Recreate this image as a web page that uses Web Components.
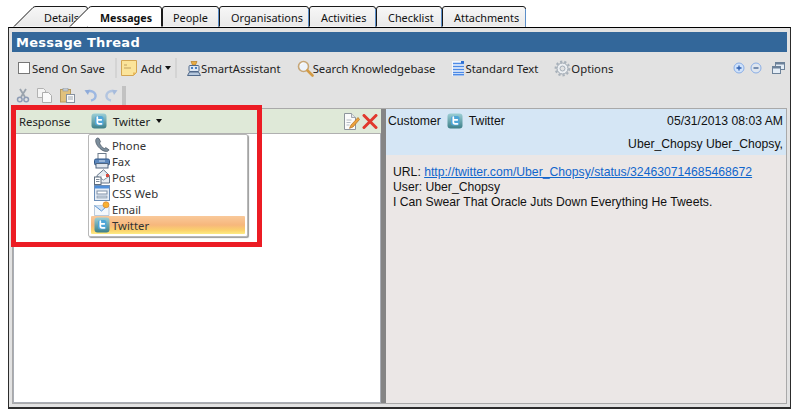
<!DOCTYPE html>
<html><head><meta charset="utf-8"><style>html,body{margin:0;background:#fff}</style></head><body>
<x-app></x-app>
<script>
const FONT='"Noto Sans","Open Sans",sans-serif';
const ICONS={
twitter:`<svg width="16" height="16" viewBox="0 0 16 16"><defs><linearGradient id="t1" x1="0" y1="0" x2="0" y2="1"><stop offset="0" stop-color="#9ccfd6"/><stop offset="1" stop-color="#3d7f88"/></linearGradient></defs><rect x=".5" y=".5" width="15" height="15" rx="3" fill="url(#t1)"/><rect x="4" y="3" width="8.5" height="9.5" rx="2.5" fill="#4fa6d8"/><path d="M6.3 4v5c0 1.3.7 1.8 1.8 1.8h2.4M6.3 6.8h4" fill="none" stroke="#fff" stroke-width="1.7" stroke-linecap="round"/></svg>`,
phone:`<svg width="16" height="16" viewBox="0 0 16 16"><path d="M2.500 1.500C1 3 1.500 6 4 9.500c2.500 3 5.500 5 8.500 5 1.300 0 2.300-.8 2.500-1.700l-3.200-2.200-1.400 1C8.500 10.800 6.500 8.500 5.500 6l1-1.300L5 1.500 3.500 1z" fill="#7c8e9c" stroke="#46525e" stroke-width=".7"/></svg>`,
fax:`<svg width="16" height="16" viewBox="0 0 16 16"><rect x="4" y=".5" width="8" height="6" fill="#fff" stroke="#6e7c8c"/><rect x=".5" y="6" width="15" height="6" rx="1.500" fill="#5b87bd" stroke="#2f5585"/><rect x="2" y="10.500" width="12" height="4.500" fill="#dfe6ee" stroke="#4e6580"/><path d="M5 8h6" stroke="#d7e4f2"/></svg>`,
post:`<svg width="16" height="16" viewBox="0 0 16 16"><path d="M3 6.500 9.500.8 15.500 6.500V14H3z" fill="#e7edf3" stroke="#66778a"/><path d="M3 7l6.500 4 6-4" fill="#fff" stroke="#8696a6"/><rect x="12" y="5" width="3" height="3" fill="#d84a3f"/><rect x=".5" y="8" width="6.500" height="7.500" fill="#fff" stroke="#5d6d7f"/><path d="M2 10.500h3.500M2 12.500h3.500" stroke="#7d8a98"/></svg>`,
web:`<svg width="16" height="16" viewBox="0 0 16 16"><rect x=".5" y=".5" width="15" height="15" fill="#e6edf6" stroke="#6a8db8"/><rect x="1" y="1" width="14" height="2.500" fill="#4f8fda"/><rect x="3" y="6" width="10" height="3" fill="#fff" stroke="#7d8fa6"/><rect x="3" y="11" width="10" height="2" fill="#c9d3df" stroke="#7d8fa6" stroke-width=".6"/></svg>`,
email:`<svg width="16" height="16" viewBox="0 0 16 16"><path d="M.5 4.500h11l3.500 1V14.500H.5z" fill="#f4f8fc" stroke="#a9bdd2" stroke-width=".8"/><path d="M.5 4.500 7.500 10 13 5" fill="#cfe2f5" stroke="#5f97d6"/><circle cx="12" cy="3.800" r="3" fill="#f8b133" stroke="#d9822b" stroke-width=".7"/></svg>`,
note:`<svg width="16" height="16" viewBox="0 0 16 16"><path d="M.5.500h15v12l-3 3H.5z" fill="#fbe49a" stroke="#d3a552"/><path d="M3 5h3M3 8h7" stroke="#c0a060"/><path d="M12 15.500v-3h3.500z" fill="#e9b95a"/></svg>`,
assist:`<svg width="16" height="16" viewBox="0 0 16 16"><path d="M5 1.500h6L9.500 5h-3z" fill="#e8ad45" stroke="#b57d27" stroke-width=".7"/><rect x="3" y="5.500" width="10" height="6" rx="1" fill="#dce6f2" stroke="#50698a"/><rect x="5" y="7" width="2" height="2" fill="#4a7fc0"/><rect x="9" y="7" width="2" height="2" fill="#4a7fc0"/><path d="M1.500 15.500 3.500 12h9l2 3.500z" fill="#b6c8dd" stroke="#50698a"/></svg>`,
search:`<svg width="17" height="17" viewBox="0 0 17 17"><circle cx="6.500" cy="6.500" r="5" fill="#eef4fb" stroke="#c7a676" stroke-width="1.600"/><path d="M3.500 5a3.500 3.500 0 0 1 3-2" stroke="#fff" fill="none"/><path d="M10.500 10.500l5 5" stroke="#d39b45" stroke-width="2.600" stroke-linecap="round"/></svg>`,
list:`<svg width="13" height="15" viewBox="0 0 13 15"><rect width="12" height="15" fill="#f3f7fd"/><path d="M1 2.500h11M1 5.500h11M1 8.500h11M1 11.500h11M1 13.800h11" stroke="#4d8ae6" stroke-width="1.600"/><rect x="9" y="0" width="3" height="2.500" fill="#2f6fd0"/></svg>`,
gear:`<svg width="17" height="17" viewBox="0 0 17 17"><circle cx="8.500" cy="8.500" r="5.500" fill="#eceff2" stroke="#9ca6b0"/><circle cx="8.500" cy="8.500" r="6.800" fill="none" stroke="#a8b1ba" stroke-width="2.200" stroke-dasharray="2.200 2"/><circle cx="8.500" cy="8.500" r="2.500" fill="#e2e2e2" stroke="#a3adb7"/></svg>`,
plus:`<svg width="12" height="12" viewBox="0 0 12 12"><circle cx="6" cy="6" r="5" fill="#cfe2fb" stroke="#8aaee6"/><path d="M3.500 6h5M6 3.500v5" stroke="#2d5db0" stroke-width="1.300"/></svg>`,
minus:`<svg width="12" height="12" viewBox="0 0 12 12"><circle cx="6" cy="6" r="5" fill="#dfe6ef" stroke="#8aaee6"/><path d="M3.500 6h5" stroke="#3d5f90" stroke-width="1.300"/></svg>`,
win:`<svg width="13" height="12" viewBox="0 0 13 12"><rect x="3.500" y=".5" width="9" height="7" fill="#e4edf6" stroke="#6d8299"/><rect x="4" y="1" width="8" height="1.500" fill="#6d8299"/><rect x=".5" y="4.500" width="8" height="7" fill="#e4edf6" stroke="#6d8299"/><rect x="1" y="5" width="7" height="1.500" fill="#6d8299"/></svg>`,
cut:`<svg width="14" height="15" viewBox="0 0 14 15"><path d="M4 1l5 8M10 1L5 9" stroke="#9aa3ad" stroke-width="1.800"/><circle cx="3.800" cy="11.500" r="2.300" fill="none" stroke="#8e9cb5" stroke-width="1.500"/><circle cx="10.200" cy="11.500" r="2.300" fill="none" stroke="#8e9cb5" stroke-width="1.500"/></svg>`,
copy:`<svg width="16" height="15" viewBox="0 0 16 15"><path d="M.5.500h6l2 2v7h-8z" fill="#f4f4f4" stroke="#b2b2b2"/><path d="M5.500 4.500h6l3 3v7h-9z" fill="#fafafa" stroke="#adadad"/></svg>`,
paste:`<svg width="15" height="15" viewBox="0 0 15 15"><rect x=".5" y="1.500" width="10" height="12.500" fill="#e1c17d" stroke="#b69a5e"/><rect x="3" y="0" width="5" height="3" fill="#c3cad3" stroke="#8d96a0" stroke-width=".6"/><rect x="6.500" y="6.500" width="8" height="8" fill="#fbfbfb" stroke="#8792a0"/><path d="M8 9h5M8 11h5" stroke="#9ea8b3"/></svg>`,
undo:`<svg width="14" height="13" viewBox="0 0 14 13"><path d="M3 3c4-2.500 9 .5 8.500 4.500C11.300 9.800 9 11 7 11.500" fill="none" stroke="#9db8e2" stroke-width="2.400"/><path d="M.5 1.200 5.800.8 4 6z" fill="#8fabd9"/></svg>`,
redo:`<svg width="14" height="13" viewBox="0 0 14 13"><path d="M11 3C7 .5 2 3.500 2.500 7.500 2.700 9.800 5 11 7 11.500" fill="none" stroke="#b3c5e0" stroke-width="2.400"/><path d="M13.500 1.200 8.200.8 10 6z" fill="#a6bbdc"/></svg>`,
edit:`<svg width="17" height="17" viewBox="0 0 17 17"><path d="M1.500.5h7l4 4v12h-11z" fill="#fbfbfb" stroke="#8e959c"/><path d="M8.500.5v4h4" fill="#e3e6ea" stroke="#8e959c" stroke-width=".8"/><path d="M3.500 7h5M3.500 9.500h4M3.500 12h3" stroke="#b5bcc4"/><path d="M15 4.500 8 12l-1.500 3.300L10 14l6.500-7.500z" fill="#eda23c" stroke="#b2701e" stroke-width=".7"/></svg>`,
del:`<svg width="16" height="15" viewBox="0 0 16 15"><path d="M2 1.500 14 13.500M14 1.500 2 13.500" stroke="#e1392c" stroke-width="3" stroke-linecap="round"/></svg>`
};
const def=(n,css,html,init)=>customElements.define(n,class extends HTMLElement{connectedCallback(){if(this.shadowRoot)return;const s=this.attachShadow({mode:'open'});s.innerHTML='<style>'+css+'</style>'+(typeof html==='function'?html(this):(html||''));init&&init(this,s);}});

def('x-ico',':host{display:inline-flex;flex:none;line-height:0}',h=>ICONS[h.getAttribute('n')]);

def('x-tab',`:host{display:block;position:relative;height:21px;flex:none;font:10.900px ${FONT};color:#111}
 svg{position:absolute;left:0;top:0;overflow:visible}
 span{position:absolute;top:4px;white-space:nowrap;line-height:16px}
 :host([active]){z-index:2;font-weight:700}
 :host([active]) span{font-size:10.700px}`,h=>{
 const w=+h.getAttribute('w'),sl=h.hasAttribute('slant');
 h.style.width=w+'px';
 const d=sl?`M0 20.500 L19 1.500 Q20 .5 22 .5 H${w-3} Q${w-.5} .5 ${w-.5} 3 V20.500`:`M.5 20.500 V3 Q.5 .5 3 .5 H${w-3} Q${w-.5} .5 ${w-.5} 3 V20.500`;
 const act=h.hasAttribute('active');
 return `<svg width="${w}" height="21"><defs><linearGradient id="g" x1="0" y1="0" x2="0" y2="1"><stop offset="0" stop-color="${act?'#fff':'#f7f7f7'}"/><stop offset="1" stop-color="${act?'#fff':'#e9e9e9'}"/></linearGradient></defs><path d="${d}" fill="url(#g)" stroke="#1a1a1a"/>${sl?'':`<path d="M${w-.5} 3V20.500" stroke="#5c8fc9"/>`}</svg><span style="left:${h.getAttribute('tx')}px"><slot></slot></span>`;
});

def('x-tabs',':host{display:flex;height:21px;margin-top:6px;padding-left:14px}','<slot></slot>');

def('x-title',`:host{display:flex;align-items:center;height:20px;margin:4px 3px 0 3px;padding-left:4px;background:#33679a;color:#fff;font:700 13px "DejaVu Sans",sans-serif;letter-spacing:.28px}`,'<slot></slot>');

def('x-bar',`:host{display:flex;align-items:center;box-sizing:border-box;font:11.300px ${FONT};color:#222;white-space:nowrap}`,'<slot></slot>');
def('x-sep',':host{display:block;width:2px;height:20px;background:#d4d4d4;flex:none}');
def('x-check',':host{display:block;width:10px;height:10px;background:#fff;border:1px solid #777;flex:none}');
def('x-caret',':host{display:block;width:0;height:0;border:3.500px solid transparent;border-top:4px solid #111;border-bottom:0;flex:none}');

def('x-item',`:host{display:flex;align-items:center;height:16px;gap:2px;padding-left:3px;font:11.300px ${FONT};color:#333;white-space:nowrap}
 :host([sel]){height:18px;margin-top:-1px;background:linear-gradient(#f9c99a 0,#f7b77c 50%,#fbd26c 80%,#fdeb83 100%);border-radius:1px}`,h=>`<x-ico n="${h.getAttribute('n')}"></x-ico><slot></slot>`);

def('x-menu',`:host{position:absolute;left:74px;top:0;background:#fff;border:1px solid #b8b8b8;border-radius:2px;padding:2px 2px 1px;box-shadow:1px 1px 1px #999;box-sizing:border-box;width:160px;height:103px;z-index:4}`,'<slot></slot>');
def('x-left',`:host{display:flex;flex-direction:column;width:366px;flex:none;border:1px solid #a9adb5;border-top:0;background:#fff;position:relative}
 header{display:flex;align-items:center;height:24px;background:#dfe9d8;border-bottom:1px solid #b0b0b0;margin:0 -1px;font:11.300px ${FONT};color:#222;padding:0 3px 0 6px}
 .sp{flex:1}.body{flex:1;position:relative}`,`<header><span style="width:72px">Response</span><x-ico n="twitter"></x-ico><span style="margin:0 6px 0 6px">Twitter</span><x-caret></x-caret><span class="sp"></span><x-ico n="edit"></x-ico><span style="width:2px"></span><x-ico n="del"></x-ico></header><div class="body"><slot></slot></div>`);
def('x-right',`:host{display:flex;flex-direction:column;flex:1;min-width:0;background:#ebe7e6;font:12.200px "Liberation Sans",sans-serif;color:#111}
 header{background:#d5e6f5;height:46px;padding:3px 3px 0 2px;box-sizing:border-box}
 .r{display:flex;align-items:center;height:18px}
 .sp{flex:1}
 .e{justify-content:flex-end;margin-top:5px}
 main{padding:10px 7px;line-height:15px}
 a{color:#1166cc;text-decoration:underline}`,`<header><div class="r"><span>Customer</span><x-ico n="twitter" style="margin:0 6px 0 6px"></x-ico><span>Twitter</span><span class="sp"></span><span>05/31/2013 08:03 AM</span></div><div class="r e"><span>Uber_Chopsy Uber_Chopsy,</span></div></header><main>URL: <a>http://twitter.com/Uber_Chopsy/status/324630714685468672</a><br>User: Uber_Chopsy<br>I Can Swear That Oracle Juts Down Everything He Tweets.</main>`);
def('x-split',`:host{display:flex;flex:1;margin:0 3px 3px 3px;border:1px solid #a9a9a9;min-height:0}
 .s{width:5px;background:#858585;flex:none}`,`<slot name="l"></slot><div class="s"></div><slot name="r"></slot>`);
def('x-frame',`:host{display:flex;flex-direction:column;margin-left:8px;width:783px;height:382px;box-sizing:border-box;background:#e2e2e2;border:1px solid #2c2c2c;border-bottom-width:2px;border-top-color:#000}`,'<slot></slot>');
def('x-mark',`:host{position:absolute;left:11px;top:105px;width:251px;height:142px;box-sizing:border-box;border:5px solid #ec1c24;pointer-events:none;z-index:6}`);

def('x-app',':host{display:block;position:relative;width:799px;height:415px;overflow:hidden}',`
<x-tabs>
 <x-tab w="74" slant tx="30">Details</x-tab>
 <x-tab w="92" slant active tx="30" style="margin-left:-18px">Messages</x-tab>
 <x-tab w="57" tx="11">People</x-tab>
 <x-tab w="90" tx="12">Organisations</x-tab>
 <x-tab w="67" tx="12">Activities</x-tab>
 <x-tab w="66" tx="12">Checklist</x-tab>
 <x-tab w="84" tx="12">Attachments</x-tab>
</x-tabs>
<x-frame>
 <x-title>Message Thread</x-title>
 <x-bar style="height:34px;padding:0 0 2px 9px">
  <x-check></x-check><span style="margin-left:2px">Send On Save</span>
  <x-sep style="margin:0 4px 0 10px"></x-sep><x-ico n="note"></x-ico><span style="margin:0 3px 0 4px">Add</span><x-caret></x-caret>
  <x-sep style="margin:0 9px 0 4px"></x-sep><x-ico n="assist"></x-ico><span style="margin-left:-1px">SmartAssistant</span>
  <x-ico n="search" style="margin-left:16px"></x-ico><span style="margin-left:-1px">Search Knowledgebase</span>
  <x-ico n="list" style="margin-left:17px"></x-ico><span>Standard Text</span>
  <x-ico n="gear" style="margin-left:16px"></x-ico><span>Options</span>
  <span style="flex:1"></span><x-ico n="plus"></x-ico><x-ico n="minus" style="margin-left:5px"></x-ico><x-ico n="win" style="margin:0 5px 0 10px"></x-ico>
 </x-bar>
 <x-bar style="height:22px;padding:0 0 3px 7px">
  <x-ico n="cut"></x-ico><x-ico n="copy" style="margin-left:7px"></x-ico><x-ico n="paste" style="margin-left:7px"></x-ico><x-ico n="undo" style="margin-left:9px"></x-ico><x-ico n="redo" style="margin-left:6px"></x-ico><x-sep style="width:4px;height:22px;margin:3px 0 0 4px;background:#c2c2c2"></x-sep>
 </x-bar>
 <x-split>
  <x-left slot="l"><x-menu>
   <x-item n="phone">Phone</x-item><x-item n="fax">Fax</x-item><x-item n="post">Post</x-item><x-item n="web">CSS Web</x-item><x-item n="email">Email</x-item><x-item n="twitter" sel>Twitter</x-item>
  </x-menu></x-left>
  <x-right slot="r"></x-right>
 </x-split>
</x-frame>
<x-mark></x-mark>`);
</script>
</body></html>
